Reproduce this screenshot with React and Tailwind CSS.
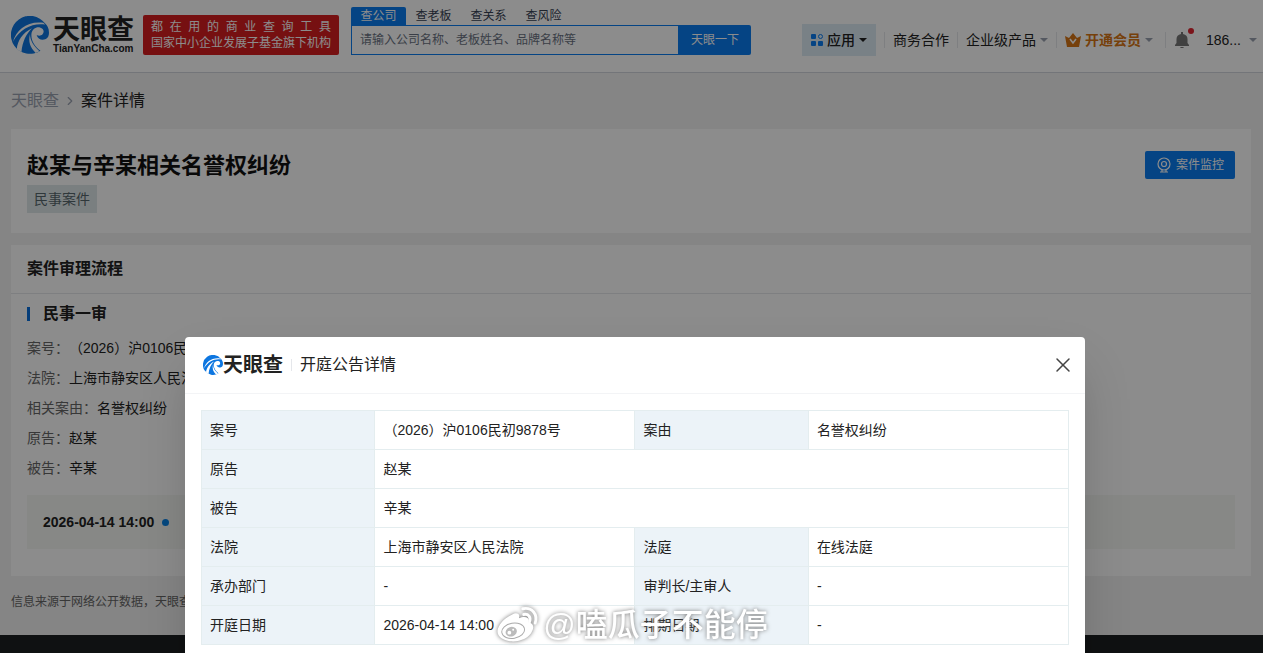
import React, { useState } from 'react';
import { X, ChevronRight } from 'lucide-react';

const searchTabs = ['查公司', '查老板', '查关系', '查风险'];

const caseInfo = [
  { label: '案号：', value: '（2026）沪0106民初9878号' },
  { label: '法院：', value: '上海市静安区人民法院' },
  { label: '相关案由：', value: '名誉权纠纷' },
  { label: '原告：', value: '赵某' },
  { label: '被告：', value: '辛某' },
];

const noticeRows = [
  [['案号', '（2026）沪0106民初9878号'], ['案由', '名誉权纠纷']],
  [['原告', '赵某']],
  [['被告', '辛某']],
  [['法院', '上海市静安区人民法院'], ['法庭', '在线法庭']],
  [['承办部门', '-'], ['审判长/主审人', '-']],
  [['开庭日期', '2026-04-14 14:00'], ['排期日期', '-']],
];

const LogoMark = ({ className }) => (
  <svg viewBox="0 0 40 40" className={className} aria-hidden="true">
    <path d="M36 8A20 20 0 1 0 31 36.500C25 32 21 26 21.500 19c.5-5 5-8 9-7 4 1 5 5 2.500 7.500-1.500 1.500-4 1.500-6 .5 1 4 5 6 9 4.500 3-1 4-4 4-7C40 13 38 10 36 8z" fill="#0d76e0" />
    <path d="M2 27C6 14 17 5 34 7l2 2C23 7 10 13 2 27z" fill="#fff" />
    <path d="M6 35c1-9 6-17 16-22-6 6-10 14-11 25z" fill="#fff" />
    <path d="M20 19c-2 8 0 14 6 20l4-2c-6-5-10-11-10-18z" fill="#fff" />
  </svg>
);

const Caret = ({ className }) => (
  <svg viewBox="0 0 8 4" className={`h-1 w-2 ${className}`} fill="currentColor" aria-hidden="true">
    <path d="M0 0h8L4 4z" />
  </svg>
);

const Divider = () => <span className="h-4 w-px bg-gray-200" />;

const Header = () => {
  const [tab, setTab] = useState('查公司');

  return (
    <header className="flex h-[73px] shrink-0 items-start border-b border-gray-300 bg-white pl-[11px]">
      <a href="#home" className="mt-4 flex w-[124px] shrink-0 items-center gap-1">
        <LogoMark className="size-[38px] shrink-0" />
        <span className="flex flex-col whitespace-nowrap text-[#222]">
          <span className="text-[27px] leading-7 font-bold">天眼查</span>
          <span className="font-['Liberation_Sans'] text-[10px] leading-[10px] font-bold">TianYanCha.com</span>
        </span>
      </a>
      <div className="mt-[15px] ml-2 flex h-10 w-[196px] shrink-0 flex-col justify-center rounded-xs bg-[#d81e20] px-2 text-xs leading-4 text-white">
        <div className="flex justify-between">
          {[...'都在用的商业查询工具'].map((c) => <span key={c}>{c}</span>)}
        </div>
        <div className="whitespace-nowrap">国家中小企业发展子基金旗下机构</div>
      </div>

      <form className="mt-[7px] ml-3 w-[400px] shrink-0" onSubmit={(e) => e.preventDefault()}>
        <div className="flex">
          {searchTabs.map((t) => (
            <button
              key={t}
              type="button"
              onClick={() => setTab(t)}
              className={`h-[18px] w-[55px] rounded-t-xs text-xs leading-[18px] ${t === tab ? 'bg-[#0a7cf0] text-white' : 'text-gray-700'}`}
            >
              {t}
            </button>
          ))}
        </div>
        <div className="flex h-[30px]">
          <input
            aria-label="搜索"
            placeholder="请输入公司名称、老板姓名、品牌名称等"
            className="min-w-0 flex-1 border border-[#0a7cf0] bg-white px-2 text-xs outline-none placeholder:text-gray-500"
          />
          <button type="submit" className="w-[72px] rounded-r-xs bg-[#0a7cf0] text-xs text-white">天眼一下</button>
        </div>
      </form>

      <nav className="mt-6 ml-auto flex h-8 shrink-0 items-center text-sm whitespace-nowrap text-[#222]">
        <button className="mr-2 flex h-8 w-[74px] items-center justify-center gap-1 bg-[#dcebf5] font-medium">
          <svg viewBox="0 0 12 12" className="size-3" fill="#0a7cf0" aria-hidden="true">
            <rect width="5" height="5" rx="1" />
            <rect y="7" width="5" height="5" rx="1" />
            <rect x="7" y="7" width="5" height="5" rx="1" />
            <circle cx="9.5" cy="2.5" r="2" fill="none" stroke="#0a7cf0" />
          </svg>
          应用
          <Caret className="text-[#222]" />
        </button>
        <Divider />
        <a href="#business" className="px-2">商务合作</a>
        <Divider />
        <a href="#products" className="flex items-center gap-1 px-2">企业级产品<Caret className="text-gray-400" /></a>
        <Divider />
        <a href="#vip" className="flex items-center gap-1 pr-3 pl-2 font-bold text-[#d87514]">
          <svg viewBox="0 0 16 14" className="h-[14px] w-4" aria-hidden="true">
            <path d="M0 3l4 2 4-5 4 5 4-2-2 11H2z" fill="#d87514" />
            <path d="M5 6l3 4 3-4" fill="none" stroke="#fff" strokeWidth="1.6" />
          </svg>
          开通会员
          <Caret className="text-gray-400" />
        </a>
        <Divider />
        <button aria-label="消息" className="relative mx-2 size-4">
          <svg viewBox="0 0 16 16" className="size-4" fill="#777" aria-hidden="true">
            <path d="M7 0h2v2c3 .5 4.500 2.500 4.500 5v4l1.500 2v1H1v-1l1.500-2V7C2.500 4.500 4 2.500 7 2zM6 15h4c-.5 1.300-3.500 1.300-4 0z" />
          </svg>
          <span className="absolute -top-1 -right-1 size-[6px] rounded-full bg-[#e02530]" />
        </button>
        <a href="#account" className="flex items-center gap-2 pr-1.5 pl-2">186...<Caret className="text-gray-400" /></a>
      </nav>
    </header>
  );
};

const CasePage = () => (
  <div className="flex min-h-screen flex-col bg-[#f2f2f2]">
    <Header />
    <main className="pr-3 pl-[11px]">
      <div className="flex h-14 items-center gap-1 text-base">
        <a href="#home" className="text-gray-400">天眼查</a>
        <ChevronRight size={14} className="text-gray-400" />
        <span className="text-[#222]">案件详情</span>
      </div>

      <section className="flex h-[104px] items-start justify-between bg-white px-4 pt-[22px]">
        <div>
          <h1 className="text-[22px] leading-[30px] font-bold text-[#111]">赵某与辛某相关名誉权纠纷</h1>
          <span className="mt-1 inline-block h-7 bg-[#dfe8ea] px-[7px] text-sm leading-7 text-[#56666c]">民事案件</span>
        </div>
        <button className="flex h-7 w-[90px] items-center justify-center gap-1 rounded-xs bg-[#0a7cf0] text-xs text-white">
          <svg viewBox="0 0 16 16" className="size-4" fill="none" stroke="currentColor" strokeWidth="1.2" aria-hidden="true">
            <circle cx="8" cy="7" r="6" />
            <circle cx="8" cy="7" r="2.500" />
            <path d="M6 12.500v2.500M10 12.500v2.500M4 15h8" />
          </svg>
          案件监控
        </button>
      </section>

      <section className="mt-3 h-[331px] bg-white">
        <h2 className="flex h-[49px] items-center border-b border-gray-200 px-4 text-base font-bold text-[#222]">案件审理流程</h2>
        <div className="px-4">
          <h3 className="flex h-[39px] items-center gap-[13px] text-base font-bold text-[#222]">
            <span className="h-[14px] w-[3px] bg-[#0a70dc]" />
            民事一审
          </h3>
          <dl className="text-sm leading-[30px]">
            {caseInfo.map((item) => (
              <div key={item.label} className="flex">
                <dt className="text-[#666]">{item.label}</dt>
                <dd className="text-[#222]">{item.value}</dd>
              </div>
            ))}
          </dl>
          <div className="mt-3 flex h-[54px] items-center gap-2 bg-[#f6f8f4] px-4 text-sm font-bold text-[#222]">
            2026-04-14 14:00
            <span className="size-[7px] rounded-full bg-[#0a84e8]" />
          </div>
        </div>
      </section>

      <p className="h-[59px] pt-4 text-xs leading-5 text-[#666]">信息来源于网络公开数据，天眼查</p>
    </main>
    <footer className="flex-1 bg-[#1d1f22]" />
  </div>
);

const Weibo = () => (
  <svg viewBox="0 0 46 40" className="h-10 w-[44px]" aria-hidden="true">
    <path d="M18 9c4-3 9-1 7 4 6-3 12-1 10 4 5 1 6 5 4 9-3 8-14 12-23 11C7 36 1 31 3 24c2-6 8-12 15-15z" fill="#fff" />
    <ellipse cx="19" cy="26" rx="12" ry="8" fill="none" stroke="#aaa" transform="rotate(-10 19 26)" />
    <ellipse cx="17" cy="27" rx="6" ry="5" fill="#bbb" transform="rotate(-20 17 27)" />
    <circle cx="15" cy="28" r="2" fill="#fff" />
    <circle cx="19" cy="25" r="1" fill="#fff" />
    <path d="M30 9c5-1 8 3 6 8M29 3c10-2 16 6 13 15" fill="none" stroke="#fff" strokeWidth="3" strokeLinecap="round" />
  </svg>
);

const NoticeDialog = ({ onClose }) => (
  <div role="dialog" aria-label="开庭公告详情" className="mt-[337px] h-[420px] w-[900px] rounded-t-sm bg-white shadow-2xl">
    <div className="flex h-[57px] items-center border-b border-gray-100 px-[18px] text-[#222]">
      <LogoMark className="size-5" />
      <span className="text-[20px] leading-7 font-bold">天眼查</span>
      <span className="mx-2 h-3 w-px bg-gray-200" />
      <h2 className="text-base">开庭公告详情</h2>
      <button onClick={onClose} aria-label="关闭" className="ml-auto -mr-2 text-[#444]">
        <X size={24} strokeWidth={1.5} />
      </button>
    </div>
    <div className="p-4">
      <table className="w-full table-fixed border-collapse text-left text-sm text-[#222]">
        <colgroup>
          <col className="w-1/5" />
          <col className="w-3/10" />
          <col className="w-1/5" />
          <col className="w-3/10" />
        </colgroup>
        <tbody>
          {noticeRows.map((row) => (
            <tr key={row[0][0]} className="h-[39px]">
              {row.map(([label, value]) => (
                <React.Fragment key={label}>
                  <th scope="row" className="border border-[#e4edef] bg-[#ecf3f8] px-2 font-normal">{label}</th>
                  <td colSpan={row.length === 1 ? 3 : 1} className="border border-[#e4edef] px-2">{value}</td>
                </React.Fragment>
              ))}
            </tr>
          ))}
        </tbody>
      </table>
    </div>
  </div>
);

const App = () => {
  const [open, setOpen] = useState(true);

  return (
    <div className="relative h-screen overflow-hidden font-['Liberation_Sans','Noto_Sans_CJK_SC',sans-serif]">
      <CasePage />
      {open && (
        <div className="absolute inset-0 flex items-start justify-center overflow-hidden bg-black/45 pl-[7px]">
          <NoticeDialog onClose={() => setOpen(false)} />
        </div>
      )}
      <div className="pointer-events-none absolute inset-x-0 bottom-2 flex items-center justify-center gap-1 text-[32px] leading-10 font-medium text-white drop-shadow-[0_0_2px_#777]">
        <Weibo />
        <span>@嗑瓜子不能停</span>
      </div>
    </div>
  );
};

export default App;
